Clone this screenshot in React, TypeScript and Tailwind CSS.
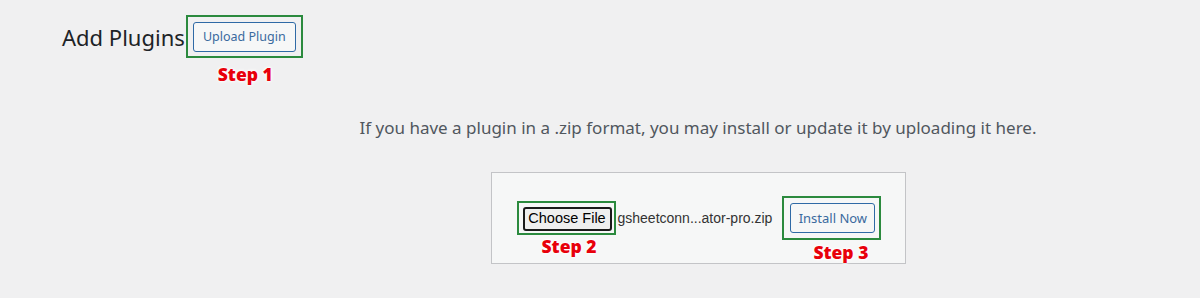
import React from 'react';

const sans = "font-['Noto_Sans','Open_Sans',sans-serif]";
const stepLabel =
    "absolute font-['Open_Sans',sans-serif] font-extrabold text-[17.5px] leading-none text-[#e8000b] whitespace-nowrap [text-shadow:0_0_2px_#fff,0_0_3px_#fff,0_0_4px_#fff]";

const App: React.FC = () => {
    return (
        <div className={`w-[1200px] h-[298px] bg-[#f0f0f1] ${sans} text-[#1d2327]`}>
            {/* Header */}
            <div className="flex items-center pl-[62px] pt-[15px]">
                <h1 className="text-[22px] font-normal leading-none">Add Plugins</h1>
                <div className="relative ml-[1px] border-2 border-[#2b8a3e] pl-[5px] pr-[5px] pt-[5px] pb-[4px]">
                    <button className="h-[30px] w-[103px] border border-[#2f6aa6] rounded-[3px] bg-[#f6f7f7] text-[#3a6a9e] text-[12.5px] leading-none">
                        Upload Plugin
                    </button>
                    <span className={`${stepLabel} left-[30px] top-[49px]`}>Step 1</span>
                </div>
            </div>

            {/* Upload area */}
            <div className="flex flex-col items-center pl-[196px] pt-[58px]">
                <p className="text-[17px] text-[#50575e] leading-[24px]">
                    If you have a plugin in a .zip format, you may install or update it by uploading it here.
                </p>
                <div className="mt-[32px] w-[415px] h-[92px] border border-[#c3c4c7] bg-[#f6f7f7] flex items-center pl-[25px]">
                    <div className="relative border-2 border-[#2b8a3e] pl-[4px] pr-[2px] py-[2px]">
                        <button className="h-[24px] w-[89px] border-2 border-[#1a1a1a] rounded-[3px] bg-[#efefef] font-['Liberation_Sans',Arial,sans-serif] text-[14.5px] leading-none text-black">
                            Choose File
                        </button>
                        <span className={`${stepLabel} left-[23px] top-[35px]`}>Step 2</span>
                    </div>
                    <span className="ml-[2px] font-['Liberation_Sans',Arial,sans-serif] text-[14px] text-[#333]">
                        gsheetconn...ator-pro.zip
                    </span>
                    <div className="relative ml-[10px] border-2 border-[#2b8a3e] pl-[6px] pr-[4px] py-[5px]">
                        <button className="h-[30px] w-[85px] border border-[#2f6aa6] rounded-[3px] bg-[#f6f7f7] text-[#3a6a9e] text-[13px] leading-none">
                            Install Now
                        </button>
                        <span className={`${stepLabel} left-[29px] top-[46px]`}>Step 3</span>
                    </div>
                </div>
            </div>
        </div>
    );
};

export default App;
